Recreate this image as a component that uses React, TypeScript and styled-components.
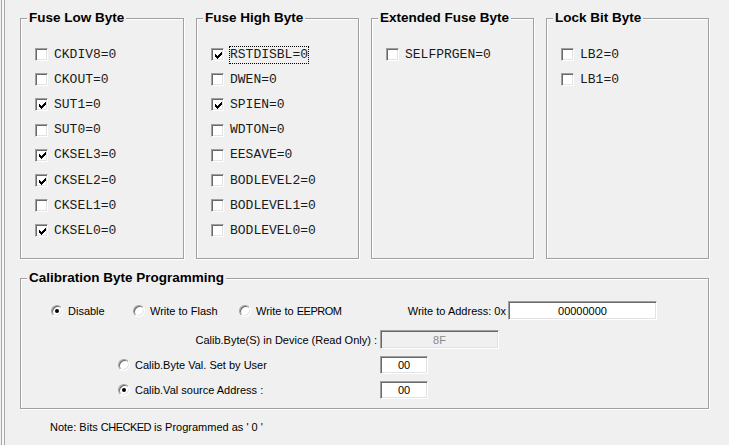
import styled, { createGlobalStyle } from "styled-components";

const GlobalStyle = createGlobalStyle`
  html, body {
    margin: 0;
    padding: 0;
    background: #f0f0f0;
  }
  body {
    font-family: "Liberation Sans", Arial, sans-serif;
    color: #000;
  }
`;

type Bit = { name: string; checked: boolean; focused?: boolean };

const lowFuses: Bit[] = [
  { name: "CKDIV8=0", checked: false },
  { name: "CKOUT=0", checked: false },
  { name: "SUT1=0", checked: true },
  { name: "SUT0=0", checked: false },
  { name: "CKSEL3=0", checked: true },
  { name: "CKSEL2=0", checked: true },
  { name: "CKSEL1=0", checked: false },
  { name: "CKSEL0=0", checked: true },
];

const highFuses: Bit[] = [
  { name: "RSTDISBL=0", checked: true, focused: true },
  { name: "DWEN=0", checked: false },
  { name: "SPIEN=0", checked: true },
  { name: "WDTON=0", checked: false },
  { name: "EESAVE=0", checked: false },
  { name: "BODLEVEL2=0", checked: false },
  { name: "BODLEVEL1=0", checked: false },
  { name: "BODLEVEL0=0", checked: false },
];

const extFuses: Bit[] = [{ name: "SELFPRGEN=0", checked: false }];

const lockBits: Bit[] = [
  { name: "LB2=0", checked: false },
  { name: "LB1=0", checked: false },
];

const groups = [
  { title: "Fuse Low Byte", width: 164, bits: lowFuses },
  { title: "Fuse High Byte", width: 163, bits: highFuses },
  { title: "Extended Fuse Byte", width: 163, bits: extFuses },
  { title: "Lock Bit Byte", width: 163, bits: lockBits },
];

const CheckMark = () => (
  <svg width="7" height="7" viewBox="0 0 7 7" shapeRendering="crispEdges">
    <rect x="0" y="2" width="1" height="3" fill="#000" />
    <rect x="1" y="3" width="1" height="3" fill="#000" />
    <rect x="2" y="4" width="1" height="3" fill="#000" />
    <rect x="3" y="3" width="1" height="3" fill="#000" />
    <rect x="4" y="2" width="1" height="3" fill="#000" />
    <rect x="5" y="1" width="1" height="3" fill="#000" />
    <rect x="6" y="0" width="1" height="3" fill="#000" />
  </svg>
);

const App = () => {
  return (
    <Window>
      <GlobalStyle />
      <Splitter />
      <Main>
        <TopRow>
          {groups.map((g) => (
            <Group key={g.title} $width={g.width}>
              <Legend>{g.title}</Legend>
              <BitList>
                {g.bits.map((b) => (
                  <BitRow key={b.name}>
                    <CheckBox>{b.checked && <CheckMark />}</CheckBox>
                    <BitLabel $focused={!!b.focused}>{b.name}</BitLabel>
                  </BitRow>
                ))}
              </BitList>
            </Group>
          ))}
        </TopRow>

        <CalibGroup>
          <Legend>Calibration Byte Programming</Legend>
          <CalibBody>
            <ModeRow>
              <RadioOption $width={82}>
                <Radio $on />
                <span>Disable</span>
              </RadioOption>
              <RadioOption $width={106}>
                <Radio />
                <span>Write to Flash</span>
              </RadioOption>
              <RadioOption>
                <Radio />
                <span>
                  Write to <Caps>EEPROM</Caps>
                </span>
              </RadioOption>
              <AddressField>
                <span>Write to Address: 0x</span>
                <TextBox $width={149}>00000000</TextBox>
              </AddressField>
            </ModeRow>

            <ValueGrid>
              <ReadOnlyLabel>Calib.Byte(S) in Device (Read Only) :</ReadOnlyLabel>
              <TextBox $width={119} $disabled>
                8F
              </TextBox>
              <RadioOption>
                <Radio />
                <span>Calib.Byte Val. Set by User</span>
              </RadioOption>
              <TextBox $width={48} $height={18}>
                00
              </TextBox>
              <RadioOption>
                <Radio $on />
                <span>Calib.Val source Address :</span>
              </RadioOption>
              <TextBox $width={48} $height={18}>
                00
              </TextBox>
            </ValueGrid>
          </CalibBody>
        </CalibGroup>

        <Note>
          Note: Bits <Caps>CHECKED</Caps> is Programmed as ' 0 '
        </Note>
      </Main>
    </Window>
  );
};

const Window = styled.div`
  display: flex;
  width: 729px;
  height: 445px;
  overflow: hidden;
  background: #f0f0f0;
`;

const Splitter = styled.div`
  flex: none;
  width: 2px;
  margin-left: 1px;
  border-left: 1px solid #a8a8a8;
  border-right: 1px solid #a8a8a8;
  background: #f7f7f7;
`;

const Main = styled.div`
  display: flex;
  flex-direction: column;
  padding: 11px 0 0 15px;
`;

const TopRow = styled.div`
  display: flex;
  gap: 12px;
`;

const Group = styled.fieldset<{ $width: number }>`
  box-sizing: border-box;
  width: ${(p) => p.$width}px;
  height: 248px;
  margin: 0;
  padding: 0;
  min-width: 0;
  border: 1px solid #a0a0a0;
  box-shadow: 1px 1px 0 #fff, inset 1px 1px 0 #fff;
`;

const Legend = styled.legend`
  margin-left: 6px;
  padding: 0 2px;
  background: #f0f0f0;
  font-family: "Liberation Sans", Arial, sans-serif;
  font-weight: bold;
  font-size: 13.5px;
  line-height: 14px;
  color: #000;
`;

const BitList = styled.div`
  display: flex;
  flex-direction: column;
  padding: 17px 0 0 14px;
`;

const BitRow = styled.div`
  display: flex;
  align-items: center;
  gap: 6px;
  height: 25.2px;
`;

const CheckBox = styled.span`
  box-sizing: border-box;
  display: flex;
  align-items: center;
  justify-content: center;
  width: 13px;
  height: 13px;
  border: 1px solid;
  border-color: #a0a0a0 #ffffff #ffffff #a0a0a0;
  box-shadow: inset 1px 1px 0 #696969, inset -1px -1px 0 #e3e3e3;
  background: #fff;
  padding: 1px 0 0 1px;
`;

const BitLabel = styled.span<{ $focused: boolean }>`
  font-family: "Liberation Mono", "Courier New", monospace;
  font-size: 13px;
  line-height: 16px;
  color: #1a1a1a;
  outline: ${(p) => (p.$focused ? "1px dotted #000" : "none")};
`;

const CalibGroup = styled.fieldset`
  box-sizing: border-box;
  width: 689px;
  margin: 12px 0 0;
  padding: 0;
  min-width: 0;
  border: 1px solid #a0a0a0;
  box-shadow: 1px 1px 0 #fff, inset 1px 1px 0 #fff;
`;

const CalibBody = styled.div`
  display: flex;
  flex-direction: column;
  padding: 16px 51px 9px 30px;
  font-size: 11px;
`;

const ModeRow = styled.div`
  display: flex;
  align-items: center;
  height: 19px;
`;

const RadioOption = styled.label<{ $width?: number }>`
  display: flex;
  align-items: center;
  gap: 5px;
  width: ${(p) => (p.$width ? `${p.$width}px` : "auto")};
  font-size: 11px;
  white-space: nowrap;
`;

const Caps = styled.span`
  letter-spacing: -0.5px;
`;

const Radio = styled.span<{ $on?: boolean }>`
  box-sizing: border-box;
  position: relative;
  flex: none;
  width: 12px;
  height: 12px;
  border-radius: 50%;
  border: 1px solid;
  border-color: #a0a0a0 #ffffff #ffffff #a0a0a0;
  box-shadow: inset 1px 1px 0 #696969, inset -1px -1px 0 #e3e3e3;
  background: #fff;

  &::after {
    content: "";
    display: ${(p) => (p.$on ? "block" : "none")};
    position: absolute;
    left: 3px;
    top: 3px;
    width: 4px;
    height: 4px;
    border-radius: 50%;
    background: #000;
  }
`;

const AddressField = styled.div`
  display: flex;
  align-items: center;
  gap: 2px;
  margin-left: auto;
  white-space: nowrap;
`;

const TextBox = styled.div<{ $width: number; $height?: number; $disabled?: boolean }>`
  box-sizing: border-box;
  display: flex;
  align-items: center;
  justify-content: center;
  width: ${(p) => p.$width}px;
  height: ${(p) => p.$height ?? 19}px;
  border: 1px solid;
  border-color: #a0a0a0 #ffffff #ffffff #a0a0a0;
  box-shadow: inset 1px 1px 0 #696969, inset -1px -1px 0 #e3e3e3;
  background: ${(p) => (p.$disabled ? "#f0f0f0" : "#fff")};
  color: ${(p) => (p.$disabled ? "#8a8a8a" : "#000")};
  font-size: 11px;
`;

const ValueGrid = styled.div`
  display: grid;
  grid-template-columns: 259px auto;
  column-gap: 3px;
  row-gap: 7px;
  align-items: center;
  justify-items: start;
  margin: 10px 0 0 67px;
`;

const ReadOnlyLabel = styled.span`
  justify-self: end;
  white-space: nowrap;
`;

const Note = styled.div`
  margin-top: 12px;
  padding-left: 30px;
  font-size: 11px;
`;

export default App;
